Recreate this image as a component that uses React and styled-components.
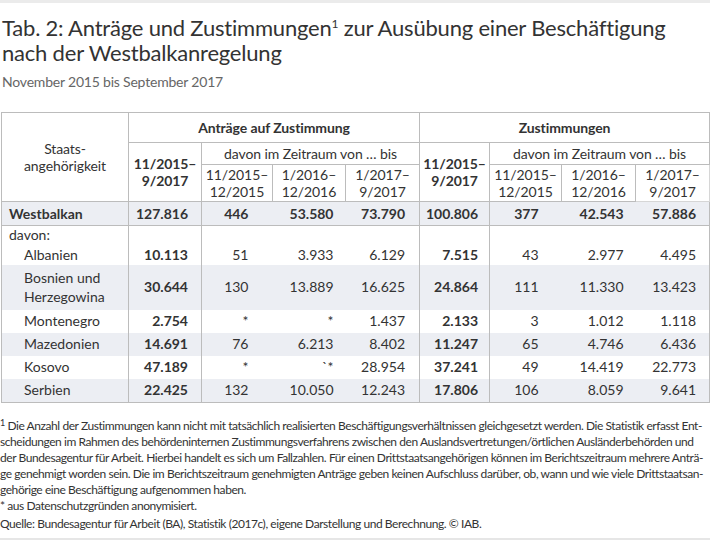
import React from "react";
import styled, { createGlobalStyle } from "styled-components";

const Global = createGlobalStyle`
  html, body { margin: 0; padding: 0; background: #fff; }
  body { font-family: Lato, "Noto Sans", sans-serif; color: #333; }
`;

const Page = styled.div`
  width: 710px;
  height: 540px;
  box-sizing: border-box;
  border-top: 3px solid #ebebeb;
  border-bottom: 2px solid #e6e6e6;
  padding: 12px 0 0 0;
  overflow: hidden;
`;

const Title = styled.h1`
  margin: 0 0 0 2px;
  font-size: 22px;
  font-weight: 400;
  line-height: 25px;
  color: #333;
  letter-spacing: -0.2px;
`;

const Sup = styled.sup`
  font-size: 12px;
  line-height: 0;
  vertical-align: 8px;
`;

const Subtitle = styled.div`
  margin: 8px 0 0 2px;
  font-size: 14px;
  line-height: 18px;
  color: #666;
  letter-spacing: -0.2px;
`;

const Table = styled.table`
  margin: 21px 0 0 1px;
  width: 708px;
  table-layout: fixed;
  border-collapse: collapse;
  border: 1px solid #bcbcbc;
  font-size: 14px;
  color: #333;
`;

const Col = styled.col`
  width: ${(p) => p.$w}px;
`;

const Th = styled.th`
  border: 1px solid ${(p) => (p.$light ? "#d6d6d6" : "#bcbcbc")};
  font-weight: ${(p) => (p.$bold ? 700 : 400)};
  text-align: center;
  vertical-align: middle;
  padding: 0 2px;
  height: ${(p) => p.$h}px;
  line-height: 17px;
  box-sizing: border-box;
  letter-spacing: -0.1px;
`;

const Tr = styled.tr`
  background: ${(p) => (p.$shade ? "#eceef3" : "#fff")};
  height: ${(p) => p.$h}px;
  border-bottom: ${(p) => (p.$line ? "1px solid #bcbcbc" : "none")};
`;

const NameCell = styled.td`
  border-right: 1px solid #bcbcbc;
  padding: 0 0 0 ${(p) => (p.$indent ? 22 : 7)}px;
  font-weight: ${(p) => (p.$bold ? 700 : 400)};
  line-height: ${(p) => (p.$tall ? 19 : 16)}px;
  vertical-align: middle;
  white-space: nowrap;
`;

const Num = styled.td`
  border-right: ${(p) => (p.$sep ? "1px solid #bcbcbc" : "none")};
  text-align: right;
  padding: 0 ${(p) => p.$pr}px 0 0;
  font-weight: ${(p) => (p.$bold ? 700 : 400)};
  line-height: 16px;
  vertical-align: middle;
  white-space: nowrap;
`;

const Notes = styled.div`
  margin: 15px 0 0 0;
  font-size: 12px;
  line-height: 16px;
  color: #333;
  letter-spacing: -0.43px;
`;

const Note = styled.p`
  margin: 0 0 ${(p) => p.$mb || 0}px 0;
  white-space: nowrap;
`;

const NoteSup = styled.sup`
  font-size: 9px;
  line-height: 0;
  vertical-align: 4px;
`;

const widths = [127, 73, 71, 73, 74, 70, 72, 74, 74];
const padR = [13, 24, 12, 14, 11, 23, 12, 13];
const seps = [true, false, false, true, true, false, false, false];
const boldCols = [true, false, false, false, true, false, false, false];

const rows = [
  { name: "Albanien", v: ["10.113", "51", "3.933", "6.129", "7.515", "43", "2.977", "4.495"], h: 20 },
  { name: ["Bosnien und", "Herzegowina"], v: ["30.644", "130", "13.889", "16.625", "24.864", "111", "11.330", "13.423"], h: 45, shade: true },
  { name: "Montenegro", v: ["2.754", "*", "*", "1.437", "2.133", "3", "1.012", "1.118"], h: 23 },
  { name: "Mazedonien", v: ["14.691", "76", "6.213", "8.402", "11.247", "65", "4.746", "6.436"], h: 23, shade: true },
  { name: "Kosovo", v: ["47.189", "*", "`*", "28.954", "37.241", "49", "14.419", "22.773"], h: 23 },
  { name: "Serbien", v: ["22.425", "132", "10.050", "12.243", "17.806", "106", "8.059", "9.641"], h: 24, shade: true },
];

const Values = ({ v, allBold }) =>
  v.map((x, i) => (
    <Num key={i} $pr={padR[i]} $sep={seps[i]} $bold={allBold || boldCols[i]}>
      {x}
    </Num>
  ));

export default function App() {
  return (
    <Page>
      <Global />
      <Title>
        Tab. 2: Anträge und Zustimmungen<Sup>1</Sup> zur Ausübung einer Beschäftigung
        <br />
        nach der Westbalkanregelung
      </Title>
      <Subtitle>November 2015 bis September 2017</Subtitle>
      <Table>
        <colgroup>
          {widths.map((w, i) => (
            <Col key={i} $w={w} />
          ))}
        </colgroup>
        <thead>
          <tr>
            <Th rowSpan={3} $h={30}>
              Staats-
              <br />
              angehörigkeit
            </Th>
            <Th colSpan={4} $bold $h={30}>Anträge auf Zustimmung</Th>
            <Th colSpan={4} $bold $h={30}>Zustimmungen</Th>
          </tr>
          <tr>
            <Th rowSpan={2} $bold $h={22}>
              11/2015–
              <br />
              9/2017
            </Th>
            <Th colSpan={3} $h={22}>davon im Zeitraum von … bis</Th>
            <Th rowSpan={2} $bold $h={22}>
              11/2015–
              <br />
              9/2017
            </Th>
            <Th colSpan={3} $h={22}>davon im Zeitraum von … bis</Th>
          </tr>
          <tr>
            <Th $h={37}>11/2015–<br />12/2015</Th>
            <Th $h={37}>1/2016–<br />12/2016</Th>
            <Th $h={37}>1/2017–<br />9/2017</Th>
            <Th $h={37}>11/2015–<br />12/2015</Th>
            <Th $h={37}>1/2016–<br />12/2016</Th>
            <Th $h={37} $light>1/2017–<br />9/2017</Th>
          </tr>
        </thead>
        <tbody>
          <Tr $shade $h={24} $line>
            <NameCell $bold>Westbalkan</NameCell>
            <Values v={["127.816", "446", "53.580", "73.790", "100.806", "377", "42.543", "57.886"]} allBold />
          </Tr>
          <Tr $h={19}>
            <NameCell>davon:</NameCell>
            <Values v={["", "", "", "", "", "", "", ""]} />
          </Tr>
          {rows.map((r, i) => (
            <Tr key={i} $shade={r.shade} $h={r.h}>
              <NameCell $indent $tall={Array.isArray(r.name)}>
                {Array.isArray(r.name) ? (
                  <>
                    {r.name[0]}
                    <br />
                    {r.name[1]}
                  </>
                ) : (
                  r.name
                )}
              </NameCell>
              <Values v={r.v} />
            </Tr>
          ))}
        </tbody>
      </Table>
      <Notes>
        <Note>
          <NoteSup>1</NoteSup> Die Anzahl der Zustimmungen kann nicht mit tatsächlich realisierten Beschäftigungsverhältnissen gleichgesetzt werden. Die Statistik erfasst Ent-
        </Note>
        <Note>
          scheidungen im Rahmen des behördeninternen Zustimmungsverfahrens zwischen den Auslandsvertretungen/örtlichen Ausländerbehörden und
        </Note>
        <Note>
          der Bundesagentur für Arbeit. Hierbei handelt es sich um Fallzahlen. Für einen Drittstaatsangehörigen können im Berichtszeitraum mehrere Anträ-
        </Note>
        <Note>
          ge genehmigt worden sein. Die im Berichtszeitraum genehmigten Anträge geben keinen Aufschluss darüber, ob, wann und wie viele Drittstaatsan-
        </Note>
        <Note>gehörige eine Beschäftigung aufgenommen haben.</Note>
        <Note $mb={2}>* aus Datenschutzgründen anonymisiert.</Note>
        <Note>Quelle: Bundesagentur für Arbeit (BA), Statistik (2017c), eigene Darstellung und Berechnung. © IAB.</Note>
      </Notes>
    </Page>
  );
}
